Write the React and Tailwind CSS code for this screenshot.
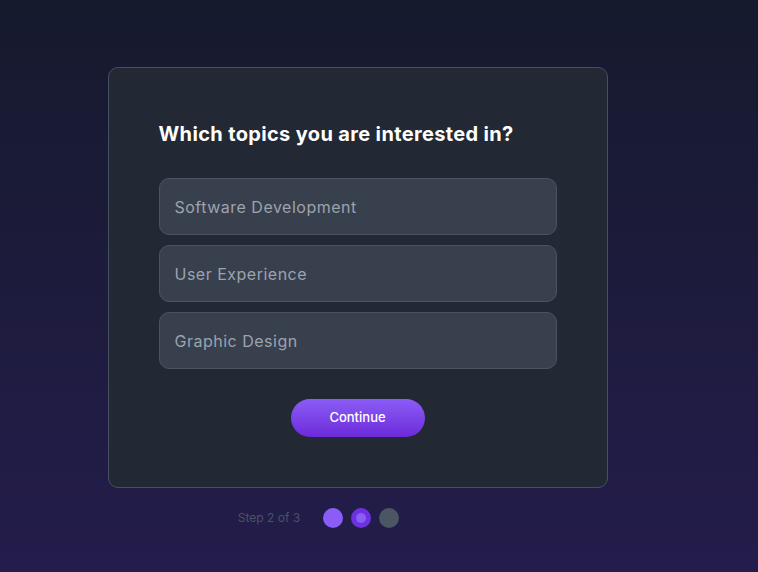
import React, { useState } from 'react';

const topics = ['Software Development', 'User Experience', 'Graphic Design'];

function App() {
  const [selected, setSelected] = useState(null);

  return (
    <div className="min-h-screen w-full bg-gradient-to-b from-[#161a2d] to-[#241c4c] font-['Inter','Open_Sans',sans-serif]">
      <div className="flex w-[715px] flex-col items-center pt-[67px]">
        {/* Card */}
        <div className="w-[500px] rounded-[10px] border border-[#475063] bg-[#222834] px-[50px] pt-[52px] pb-[50px]">
          <h1 className="text-[20px] leading-[28px] font-bold text-white tracking-[0.35px]">
            Which topics you are interested in?
          </h1>
          <div className="mt-[30px] flex flex-col gap-[10px]">
            {topics.map((t, i) => (
              <button
                key={t}
                onClick={() => setSelected(i)}
                className={`h-[57px] w-full rounded-[10px] border px-[15px] text-left text-[16px] tracking-[0.5px] text-[#9ca3af] ${
                  selected === i ? 'border-violet-500 bg-[#3a4050]' : 'border-[#4b5262] bg-[#383f4d]'
                }`}
              >
                {t}
              </button>
            ))}
          </div>
          <div className="mt-[30px] flex justify-center">
            <button className="h-[38px] w-[134px] rounded-full bg-gradient-to-b from-[#8b5cf6] to-[#6d28d9] text-[13px] font-medium text-white">
              Continue
            </button>
          </div>
        </div>

        {/* Steps */}
        <div className="mt-[20px] flex items-center pr-[78px]">
          <span className="text-[12px] text-[#4b5263]">Step 2 of 3</span>
          <div className="ml-[23px] flex items-center gap-2">
            <span className="h-5 w-5 rounded-full bg-[#8b5cf6]" />
            <span className="flex h-5 w-5 items-center justify-center rounded-full bg-[#6d32e0]">
              <span className="h-[10px] w-[10px] rounded-full bg-[#8b5cf6]" />
            </span>
            <span className="h-5 w-5 rounded-full bg-[#4b5563]" />
          </div>
        </div>
      </div>
    </div>
  );
}

export default App;
